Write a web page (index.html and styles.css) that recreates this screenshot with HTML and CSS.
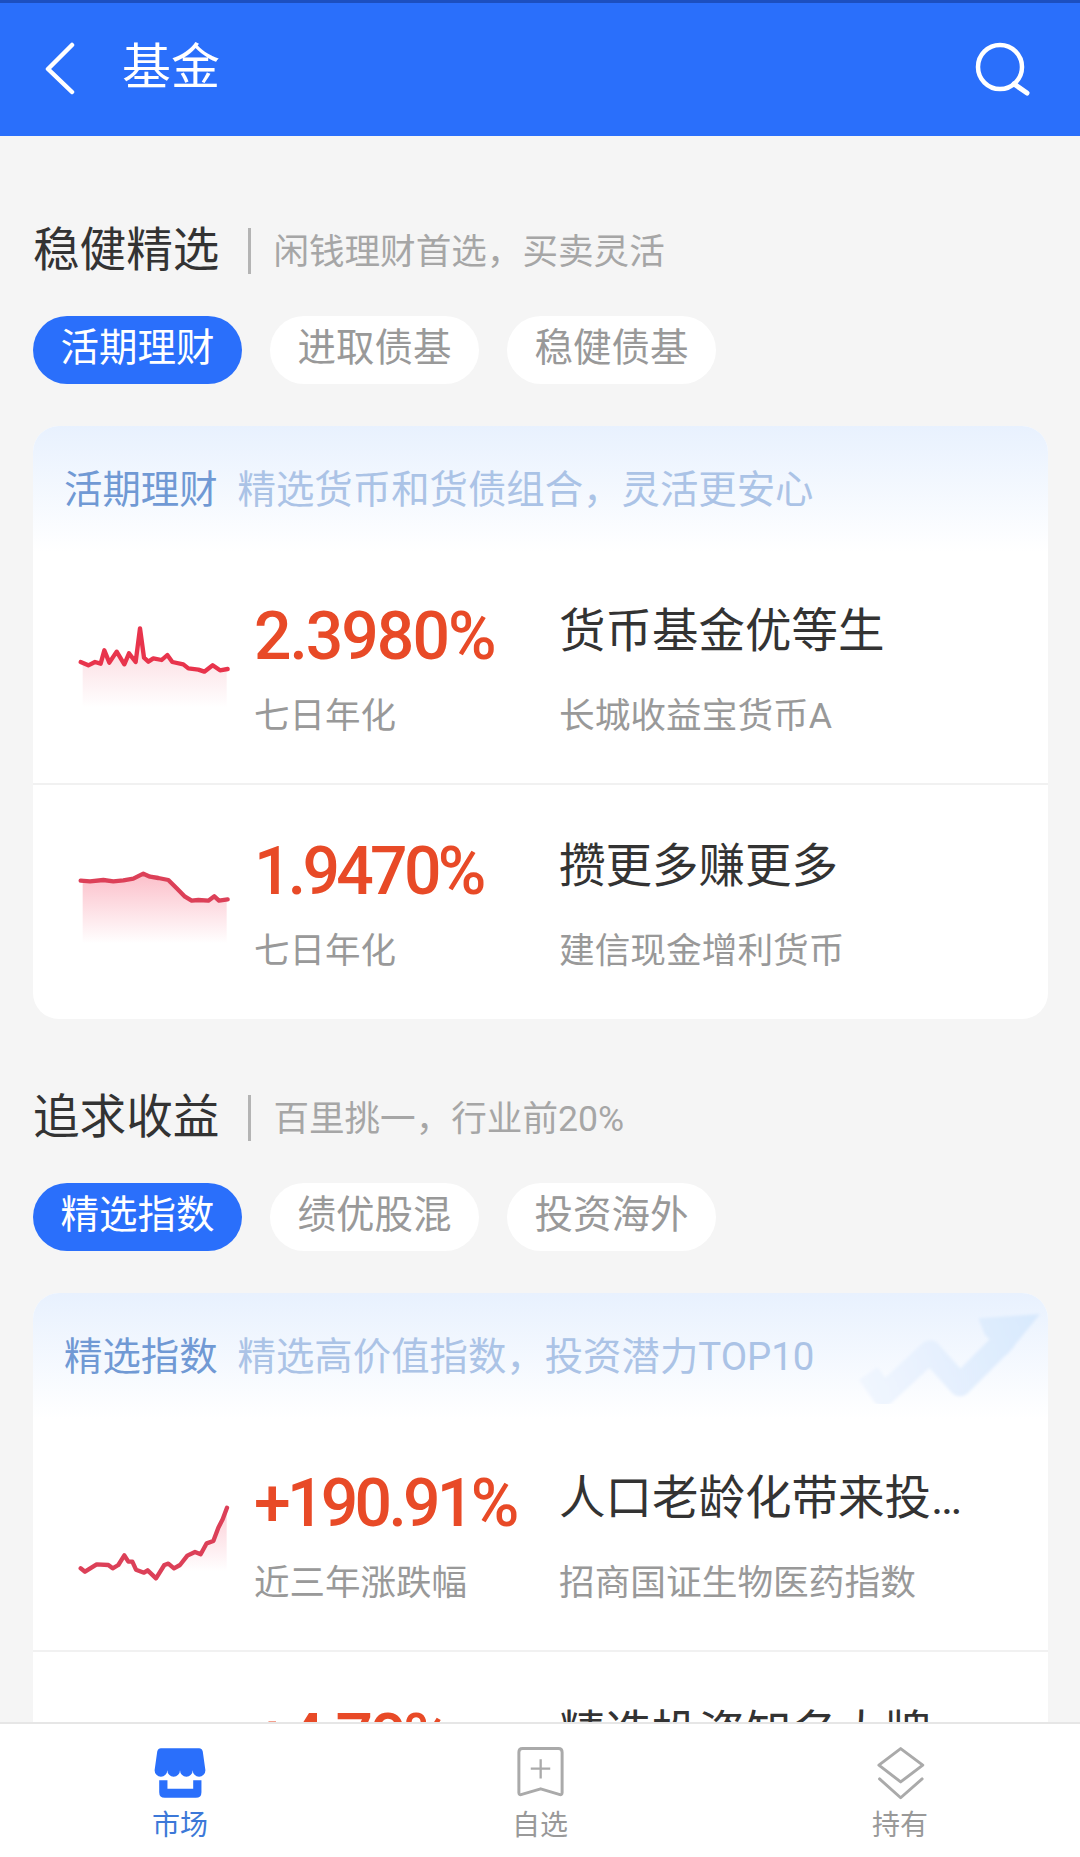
FILE: index.html
```html
<!DOCTYPE html>
<html lang="zh-CN">
<head>
<meta charset="utf-8">
<title>基金</title>
<link rel="stylesheet" href="styles.css">
</head>
<body>
<header class="topbar">
  <div class="topbar-left">
    <svg class="back" width="30" height="54" viewBox="0 0 30 54"><path d="M27 4L3 28L27 51" fill="none" stroke="#fff" stroke-width="4.5" stroke-linecap="round" stroke-linejoin="round"/></svg>
    <h1 class="page-title">基金</h1>
  </div>
  <svg class="search" width="56" height="56" viewBox="0 0 56 56"><circle cx="26" cy="27" r="22" fill="none" stroke="#fff" stroke-width="4.5"/><path d="M40 44L53 53" fill="none" stroke="#fff" stroke-width="5" stroke-linecap="round"/></svg>
</header>

<main class="content">
  <section class="section">
    <div class="section-head"><h2 class="section-title">稳健精选</h2><span class="section-rule"></span><span class="section-sub">闲钱理财首选&#xFF0C;买卖灵活</span></div>
    <div class="pills"><span class="pill pill-on">活期理财</span><span class="pill">进取债基</span><span class="pill">稳健债基</span></div>
    <div class="card">
      <div class="card-head"><span class="card-name">活期理财</span><span class="card-desc">精选货币和货债组合&#xFF0C;灵活更安心</span></div>
      <div class="row">
        <svg class="spark" width="170" height="110" viewBox="0 0 510 330">
          <defs><linearGradient id="g1" gradientUnits="userSpaceOnUse" x1="0" y1="140" x2="0" y2="290"><stop offset="0" stop-color="#fce2e6"/><stop offset="1" stop-color="#fff"/></linearGradient></defs>
          <path fill="url(#g1)" d="M38 155L55 163L75 153L92 158L103 118L118 155L140 122L163 160L177 127L197 153L210 52L222 140L235 152L250 142L275 147L292 132L307 153L340 160L355 172L385 176L403 182L428 163L450 178L470 174V290H38Z"/>
          <polyline class="spark-line" points="32,153 55,163 75,153 92,158 103,118 118,155 140,122 163,160 177,127 197,153 210,52 222,140 235,152 250,142 275,147 292,132 307,153 340,160 355,172 385,176 403,182 428,163 450,178 473,174"/>
        </svg>
        <div class="metric"><div class="metric-num">2.3980%</div><div class="metric-label">七日年化</div></div>
        <div class="info"><div class="info-name">货币基金优等生</div><div class="info-sub">长城收益宝货币A</div></div>
      </div>
      <div class="row">
        <svg class="spark" width="170" height="110" viewBox="0 -12 510 330">
          <defs><linearGradient id="g2" gradientUnits="userSpaceOnUse" x1="0" y1="85" x2="0" y2="280"><stop offset="0" stop-color="#fcc3cd"/><stop offset="1" stop-color="#fff"/></linearGradient></defs>
          <path fill="url(#g2)" d="M38 92L60 94L100 90L130 94L160 91L190 86L220 71L240 80L265 84L295 90L320 115L345 140L365 152L385 150L415 152L433 139L447 152L470 148V280H38Z"/>
          <polyline class="spark-line spark-line-dim" points="32,92 60,94 100,90 130,94 160,91 190,86 220,71 240,80 265,84 295,90 320,115 345,140 365,152 385,150 415,152 433,139 447,152 473,148"/>
        </svg>
        <div class="metric"><div class="metric-num metric-num-tight">1.9470%</div><div class="metric-label">七日年化</div></div>
        <div class="info"><div class="info-name">攒更多赚更多</div><div class="info-sub">建信现金增利货币</div></div>
      </div>
    </div>
  </section>

  <section class="section">
    <div class="section-head"><h2 class="section-title">追求收益</h2><span class="section-rule"></span><span class="section-sub">百里挑一&#xFF0C;行业前20%</span></div>
    <div class="pills"><span class="pill pill-on">精选指数</span><span class="pill">绩优股混</span><span class="pill">投资海外</span></div>
    <div class="card">
      <div class="card-head">
        <svg class="watermark" width="228" height="150" viewBox="0 9 684 450">
          <defs>
            <linearGradient id="wm" gradientUnits="userSpaceOnUse" x1="120" y1="300" x2="640" y2="90"><stop offset="0" stop-color="#f1f6fe"/><stop offset="1" stop-color="#d8e9fd"/></linearGradient>
            <filter id="soft"><feGaussianBlur stdDeviation="4"/></filter>
          </defs>
          <g filter="url(#soft)">
            <polyline points="145,250 190,315 330,185 420,285 560,145" fill="none" stroke="url(#wm)" stroke-width="68" stroke-linejoin="round"/>
            <path d="M475 85L660 72L560 195L495 135Z" fill="url(#wm)"/>
          </g>
        </svg>
        <span class="card-name">精选指数</span><span class="card-desc">精选高价值指数&#xFF0C;投资潜力TOP10</span>
      </div>
      <div class="row">
        <svg class="spark" width="170" height="110" viewBox="0 -39 510 330">
          <defs><linearGradient id="g3" gradientUnits="userSpaceOnUse" x1="0" y1="60" x2="0" y2="240"><stop offset="0" stop-color="#fcd0d8"/><stop offset="1" stop-color="#fff"/></linearGradient></defs>
          <path fill="url(#g3)" d="M38 236L45 242L80 220L115 222L128 232L145 222L163 193L175 212L187 212L198 236L222 245L233 238L258 262L283 222L295 218L312 232L330 222L352 194L375 183L392 190L410 157L430 150L445 110L458 85L470 50V280H38Z"/>
          <polyline class="spark-line spark-line-dim" points="32,232 45,242 80,220 115,222 128,232 145,222 163,193 175,212 187,212 198,236 222,245 233,238 258,262 283,222 295,218 312,232 330,222 352,194 375,183 392,190 410,157 430,150 445,110 458,85 471,50"/>
        </svg>
        <div class="metric"><div class="metric-num metric-num-tight">+190.91%</div><div class="metric-label">近三年涨跌幅</div></div>
        <div class="info"><div class="info-name">人口老龄化带来投资机会</div><div class="info-sub">招商国证生物医药指数</div></div>
      </div>
      <div class="row">
        <div class="spark"></div>
        <div class="metric"><div class="metric-num metric-num-tight">+4.70%</div><div class="metric-label">近三年涨跌幅</div></div>
        <div class="info"><div class="info-name">精选投资知名大牌</div><div class="info-sub">指数基金</div></div>
      </div>
    </div>
  </section>
</main>

<nav class="tabbar">
  <div class="tab tab-on">
    <svg width="66" height="66" viewBox="50 30 200 200">
      <path fill="#2a6ffb" d="M92 55H208Q216 55 219 65L227 122A19.25 19.25 0 0 1 188.5 122A19.25 19.25 0 0 1 150 122A19.25 19.25 0 0 1 111.5 122A19.25 19.25 0 0 1 73 122L81 65Q84 55 92 55Z"/>
      <path fill="#2a6ffb" d="M87 152H112V178H190V152H215V188Q215 205 198 205H104Q87 205 87 188Z"/>
    </svg>
    <span class="tab-label">市场</span>
  </div>
  <div class="tab">
    <svg width="66" height="66" viewBox="50 30 200 200">
      <path fill="none" stroke="#aaa" stroke-width="9" stroke-linejoin="round" d="M97 56H206Q217 56 217 67V190Q217 198 208 195L152 178L95 195Q86 198 86 190V67Q86 56 97 56Z"/>
      <path fill="none" stroke="#aaa" stroke-width="7" d="M122 117H181M152 88V147"/>
    </svg>
    <span class="tab-label">自选</span>
  </div>
  <div class="tab">
    <svg width="66" height="66" viewBox="50 30 200 200">
      <path fill="none" stroke="#aaa" stroke-width="9" stroke-linejoin="round" d="M152 56L219 106L152 157L86 106Z"/>
      <path fill="none" stroke="#aaa" stroke-width="9" stroke-linejoin="round" stroke-linecap="round" d="M88 148L152 205L217 148"/>
    </svg>
    <span class="tab-label">持有</span>
  </div>
</nav>
</body>
</html>
```
FILE: styles.css
```css
* { box-sizing: border-box; }
html, body { margin: 0; padding: 0; }
body {
  width: 1080px;
  height: 1857px;
  overflow: hidden;
  display: flex;
  flex-direction: column;
  background: #f5f5f5;
  font-family: "Roboto", "Noto Sans CJK SC", sans-serif;
}
h1, h2 { margin: 0; font-weight: 400; }

.topbar {
  flex: none;
  height: 136px;
  background: #2a6ffb;
  border-top: 3px solid #1c4fbf;
  display: flex;
  align-items: center;
  justify-content: space-between;
  padding: 0 50px 3px 45px;
  color: #fff;
}
.topbar-left { display: flex; align-items: center; gap: 47px; }
.page-title { font-size: 49px; line-height: 60px; }

.content {
  flex: 1;
  min-height: 0;
  overflow: hidden;
  padding: 87px 32px 0 33px;
  display: flex;
  flex-direction: column;
  gap: 71px;
}
.section { flex: none; }
.section-head { display: flex; align-items: center; height: 54px; }
.section-title { font-size: 46.6px; line-height: 54px; color: #333; }
.section-rule { width: 3px; height: 46px; background: #b4b4b4; margin: 2px 22px 0 29px; }
.section-sub { font-size: 35.6px; line-height: 54px; color: #a6a6a6; padding-top: 3px; }

.pills { display: flex; gap: 28px; margin-top: 39px; }
.pill {
  width: 209px;
  height: 68px;
  border-radius: 34px;
  background: #fff;
  color: #999;
  font-size: 38.5px;
  line-height: 64px;
  text-align: center;
}
.pill-on { background: #2a6ffb; color: #fff; }

.card {
  margin-top: 42px;
  background: #fff;
  border-radius: 26px;
  overflow: hidden;
}
.card-head {
  position: relative;
  height: 126px;
  padding: 34px 31px 0;
  background: linear-gradient(#e8f1fe, #fff);
  font-size: 38.4px;
  line-height: 60px;
  white-space: nowrap;
}
.card-name { position: relative; color: #7099d4; margin-right: 20px; }
.card-desc { position: relative; color: #abc3e6; }
.watermark { position: absolute; top: 0; right: 0; }

.row {
  display: flex;
  align-items: flex-start;
  height: 233px;
  padding: 53px 0 0 37px;
  border-bottom: 2px solid #f1f1f1;
}
.row + .row { padding-top: 55px; }
.row:last-child { border-bottom: 0; height: 234px; }
.spark { flex: none; width: 170px; height: 110px; margin-top: 6px; }
.spark-line { fill: none; stroke: #e8344c; stroke-width: 13; stroke-linejoin: round; stroke-linecap: round; }
.spark-line-dim { stroke: #dc4058; }

.metric { flex: none; width: 305px; margin-left: 14px; }
.metric-num {
  font-size: 66px;
  font-weight: 500;
  line-height: 60px;
  letter-spacing: -2px;
  color: #e84a27;
  margin-top: 2px;
  white-space: nowrap;
}
.metric-num-tight { letter-spacing: -3.7px; }
.metric-label { font-size: 35.5px; line-height: 50px; color: #999; margin-top: 24px; white-space: nowrap; }

.info { flex: none; width: 420px; }
.info-name {
  font-size: 46.5px;
  line-height: 60px;
  color: #333;
  white-space: nowrap;
  overflow: hidden;
  text-overflow: ellipsis;
  margin-top: -4px;
}
.info-sub { font-size: 35.7px; line-height: 50px; color: #999; margin-top: 30px; white-space: nowrap; }

.tabbar {
  flex: none;
  height: 135px;
  background: #fff;
  border-top: 2px solid #e6e6e6;
  display: flex;
  position: relative;
}
.tab {
  flex: 1;
  display: flex;
  flex-direction: column;
  align-items: center;
  padding-top: 16px;
}
.tab-label { font-size: 28px; line-height: 34px; color: #999; margin-top: 3px; }
.tab-on .tab-label { color: #3c78d8; }
```
